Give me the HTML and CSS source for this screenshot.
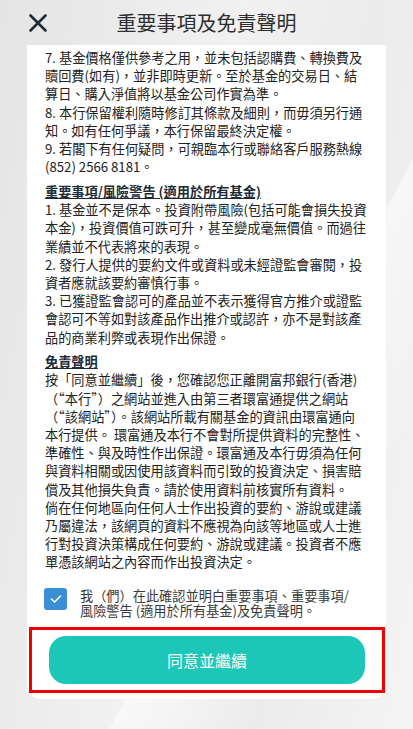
FILE: index.html
```html
<!DOCTYPE html>
<html lang="zh-Hant">
  <head>
    <meta charset="UTF-8" />
    <meta name="viewport" content="width=device-width, initial-scale=1.0" />
    <title>重要事項及免責聲明</title>
    <link rel="stylesheet" href="styles.css">
  </head>
  <body>
    <div class="page">
      <div class="topbar">
        <button class="close-btn" aria-label="close">
          <svg width="20" height="20" viewBox="0 0 20 20">
            <path d="M2.5 2.5 L17.5 17.5 M17.5 2.5 L2.5 17.5" stroke="#1e2a34" stroke-width="2.6" stroke-linecap="round" fill="none" />
          </svg>
        </button>
        <h1 class="title">重要事項及免責聲明</h1>
        <span></span>
      </div>

      <div class="sheet">
        <div class="terms">
          <p>7. 基金價格僅供參考之用，並未包括認購費、轉換費及贖回費(如有)，並非即時更新。至於基金的交易日、結算日、購入淨值將以基金公司作實為準。</p>
          <p>8. 本行保留權利隨時修訂其條款及細則，而毋須另行通知。如有任何爭議，本行保留最終決定權。</p>
          <p>9. 若閣下有任何疑問，可親臨本行或聯絡客戶服務熱線(852) 2566 8181。</p>

          <h2 class="terms-heading">重要事項/風險警告 (適用於所有基金)</h2>
          <p>1. 基金並不是保本。投資附帶風險(包括可能會損失投資本金)，投資價值可跌可升，甚至變成毫無價值。而過往業績並不代表將來的表現。</p>
          <p>2. 發行人提供的要約文件或資料或未經證監會審閱，投資者應就該要約審慎行事。</p>
          <p class="tight">3. 已獲證監會認可的產品並不表示獲得官方推介或證監會認可不等如對該產品作出推介或認許，亦不是對該產品的商業利弊或表現作出保證。</p>

          <h2 class="terms-heading">免責聲明</h2>
          <p>按「同意並繼續」後，您確認您正離開富邦銀行(香港)（“本行”）之網站並進入由第三者環富通提供之網站（“該網站”）。該網站所載有關基金的資訊由環富通向本行提供。 環富通及本行不會對所提供資料的完整性、準確性、與及時性作出保證。環富通及本行毋須為任何與資料相關或因使用該資料而引致的投資決定、損害賠償及其他損失負責。請於使用資料前核實所有資料。</p>
          <p>倘在任何地區向任何人士作出投資的要約、游說或建議乃屬違法，該網頁的資料不應視為向該等地區或人士進行對投資決策構成任何要約、游說或建議。投資者不應單憑該網站之內容而作出投資決定。</p>
        </div>

        <label class="confirm">
          <span class="checkbox">
            <svg width="12" height="10" viewBox="0 0 12 10">
              <path d="M1.5 5 L4.6 8 L10.5 2" stroke="#fff" stroke-width="1.6" fill="none" stroke-linecap="round" stroke-linejoin="round" />
            </svg>
          </span>
          <span class="confirm-text">我（們）在此確認並明白重要事項、重要事項/風險警告 (適用於所有基金)及免責聲明。</span>
        </label>

        <div class="cta">
          <button class="agree-btn">同意並繼續</button>
        </div>
      </div>
    </div>
  </body>
</html>
```

FILE: styles.css
```css
* {
  box-sizing: border-box;
}
body {
  margin: 0;
  font-family: "Noto Sans CJK TC", "Noto Sans", sans-serif;
  color: #222;
  background: #ececec;
}
.page {
  width: 413px;
  height: 729px;
  overflow: hidden;
  background:
    linear-gradient(118deg, rgba(255,255,255,0) 62%, rgba(255,255,255,0.55) 62.2%, rgba(255,255,255,0) 80%),
    linear-gradient(100deg, #e4e4e4 0%, #f1f1f1 45%, #ebebeb 70%, #f4f4f4 100%);
}
.topbar {
  height: 45px;
  display: grid;
  grid-template-columns: 1fr auto 1fr;
  align-items: center;
  padding: 0 28px;
}
.close-btn {
  border: 0;
  background: none;
  padding: 0;
  width: 20px;
  height: 20px;
  display: flex;
}
.title {
  margin: 0;
  font-size: 20px;
  font-weight: 400;
  color: #2e2e2e;
}
.sheet {
  margin: 0 27px;
  background: #fff;
  border-radius: 0 0 14px 14px;
  padding-bottom: 6px;
}
.terms {
  padding: 4px 18px 0;
  font-size: 13.2px;
  line-height: 18.2px;
}
.terms p {
  margin: 0;
}
.terms p.tight {
  text-spacing-trim: space-all;
}
.terms-heading {
  margin: 6.5px 0 0;
  font-size: 13.2px;
  line-height: 18.2px;
  font-weight: 700;
  color: #1d2a38;
  text-decoration: underline;
}
.confirm {
  display: flex;
  gap: 13px;
  padding: 16px 18px 0 17px;
  align-items: flex-start;
}
.checkbox {
  flex: none;
  width: 23px;
  height: 22px;
  border-radius: 3px;
  background: #3a8fd6;
  display: flex;
  align-items: center;
  justify-content: center;
}
.confirm-text {
  max-width: 272px;
  font-size: 13.2px;
  line-height: 15px;
  color: #3a3a3a;
}
.cta {
  margin: 9px 1px 0 2px;
  border: 3px solid #f20000;
  padding: 6px 17px;
}
.agree-btn {
  width: 100%;
  height: 48px;
  border: 0;
  border-radius: 17px;
  background: #1dc7b7;
  color: #fff;
  font-family: "Noto Sans CJK TC", sans-serif;
  font-size: 16px;
}
```
